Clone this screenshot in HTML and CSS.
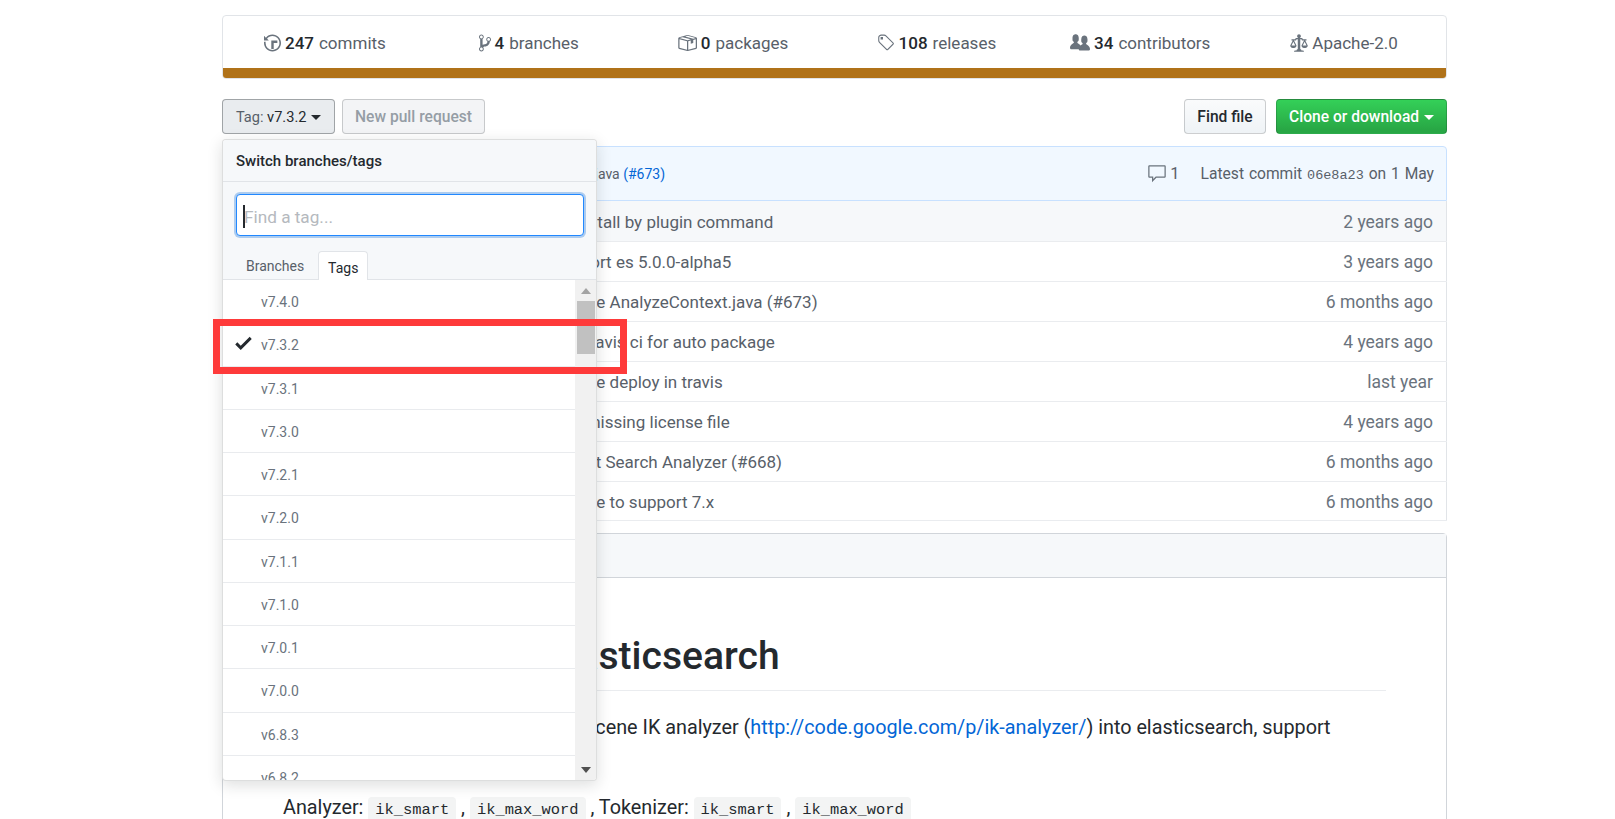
FILE: index.html
```html
<!DOCTYPE html>
<html>
<head>
<title>medcl/elasticsearch-analysis-ik</title>
<link rel="stylesheet" href="styles.css">
</head>
<body>

<div class="container">

  <div class="summary">
    <ul class="numbers">
      <li><svg class="icon" width="17" height="20" viewBox="0 0 14 16"><path d="M8 13H6V6h5v2H8v5zM7 1C4.81 1 2.87 2.02 1.59 3.59L0 2v4h4L2.5 4.5C3.55 3.17 5.17 2.3 7 2.3c3.14 0 5.7 2.56 5.7 5.7s-2.56 5.7-5.7 5.7A5.71 5.71 0 0 1 1.3 8c0-.34.03-.67.09-1H.08C.03 7.33 0 7.66 0 8c0 3.86 3.14 7 7 7s7-3.14 7-7-3.14-7-7-7z"/></svg><b>247</b> commits</li>
      <li><svg class="icon" width="12" height="20" viewBox="0 0 10 16"><path d="M10 5c0-1.11-.89-2-2-2a1.993 1.993 0 0 0-1 3.72v.3c-.02.52-.23.98-.63 1.38-.4.4-.86.61-1.38.63-.83.02-1.48.16-2 .45V4.72a1.993 1.993 0 0 0-1-3.72C.88 1 0 1.89 0 3a2 2 0 0 0 1 1.72v6.56c-.59.35-1 .99-1 1.72 0 1.11.89 2 2 2 1.11 0 2-.89 2-2 0-.53-.2-1-.53-1.36.09-.06.48-.41.59-.47.25-.11.56-.17.94-.17 1.05-.05 1.95-.45 2.75-1.25S8.95 7.77 9 6.73h-.02C9.59 6.37 10 5.73 10 5zM2 1.8c.66 0 1.2.55 1.2 1.2 0 .65-.55 1.2-1.2 1.2C1.35 4.2.8 3.65.8 3c0-.65.55-1.2 1.2-1.2zm0 12.41c-.66 0-1.2-.55-1.2-1.2 0-.65.55-1.2 1.2-1.2.65 0 1.2.55 1.2 1.2 0 .65-.55 1.2-1.2 1.2zm6-8c-.66 0-1.2-.55-1.2-1.2 0-.65.55-1.2 1.2-1.2.65 0 1.2.55 1.2 1.2 0 .65-.55 1.2-1.2 1.2z"/></svg><b>4</b> branches</li>
      <li><svg class="icon" width="20" height="20" viewBox="0 0 16 16"><path d="M1 4.27v7.47c0 .45.3.84.75.97l6.5 1.73c.16.05.34.05.5 0l6.5-1.73c.45-.13.75-.52.75-.97V4.27c0-.45-.3-.84-.75-.97l-6.5-1.74a1.4 1.4 0 0 0-.5 0L1.75 3.3c-.45.13-.75.52-.75.97zm7 9.09l-6-1.59V5l6 1.61v6.75zM2 4l2.5-.67L11 5.06l-2.5.67L2 4zm13 7.77l-6 1.59V6.61l2-.55V8.5l2-.53V5.53L15 5v6.77zm-2-7.24L6.5 2.8l2-.53L15 4l-2 .53z"/></svg><b>0</b> packages</li>
      <li><svg class="icon" width="18" height="20" viewBox="0 0 15 16"><path d="M7.73 1.73C7.26 1.26 6.62 1 5.96 1H3.5C2.13 1 1 2.13 1 3.5v2.47c0 .66.27 1.3.73 1.77l6.06 6.06c.39.39 1.02.39 1.41 0l4.59-4.59a.996.996 0 0 0 0-1.41L7.73 1.73zM2.38 7.09c-.31-.3-.47-.7-.47-1.13V3.5c0-.88.72-1.59 1.59-1.59h2.47c.42 0 .83.16 1.13.47l6.14 6.13-4.73 4.73-6.13-6.15zM3.01 3h2v2H3V3h.01z"/></svg><b>108</b> releases</li>
      <li><svg class="icon" width="20" height="20" viewBox="0 0 16 16"><path d="M16 12.999c0 .439-.45 1-1 1H7.995c-.539 0-.994-.447-.995-.999H1c-.54 0-1-.561-1-1 0-2.634 3-4 3-4s.229-.409 0-1c-.841-.621-1.058-.59-1-3 .058-2.419 1.367-3 2.5-3s2.442.58 2.5 3c.058 2.41-.159 2.379-1 3-.229.59 0 1 0 1s1.549.711 2.42 2.088C9.196 9.369 10 8.999 10 8.999s.229-.409 0-1c-.841-.62-1.058-.59-1-3 .058-2.419 1.367-3 2.5-3s2.437.581 2.495 3c.059 2.41-.158 2.38-1 3-.229.59 0 1 0 1s3.005 1.366 3.005 4z"/></svg><b>34</b> contributors</li>
      <li><svg class="icon" width="18" height="20" viewBox="0 0 14 16"><path d="M7 4c-.83 0-1.5-.67-1.5-1.5S6.17 1 7 1s1.5.67 1.5 1.5S7.83 4 7 4zm7 6c0 1.11-.89 2-2 2h-1c-1.11 0-2-.89-2-2l2-4h-1c-.55 0-1-.45-1-1H8v8c.42 0 1 .45 1 1h1c.42 0 1 .45 1 1H3c0-.55.58-1 1-1h1c0-.55.58-1 1-1h.03L6 5H5c0 .55-.45 1-1 1H3l2 4c0 1.11-.89 2-2 2H2c-1.11 0-2-.89-2-2l2-4H1V5h3c0-.55.45-1 1-1h4c.55 0 1 .45 1 1h3v1h-1l2 4zM2.5 7L1 10h3L2.5 7zM13 10l-1.5-3L10 10h3z"/></svg>Apache-2.0</li>
    </ul>
    <div class="lang-bar"></div>
  </div>

  <div class="toolbar">
    <div class="branch-select">
      <button class="btn btn-open"><span class="btn-label">Tag:</span> v7.3.2 <i class="caret"></i></button>

      <div class="menu">
        <div class="menu-header">Switch branches/tags</div>
        <div class="menu-filter">
          <input class="filter-input" type="text" placeholder="Find a tag...">
          <span class="input-caret"></span>
        </div>
        <div class="menu-tabs">
          <span class="tab">Branches</span>
          <span class="tab tab-active">Tags</span>
        </div>
        <div class="menu-body">
          <ul class="tag-list">
            <li>v7.4.0</li>
            <li class="selected"><svg class="check" width="17" height="22" viewBox="0 0 12 16"><path d="M12 5l-8 8-4-4 1.5-1.5L4 10l6.5-6.5L12 5z"/></svg>v7.3.2</li>
            <li>v7.3.1</li>
            <li>v7.3.0</li>
            <li>v7.2.1</li>
            <li>v7.2.0</li>
            <li>v7.1.1</li>
            <li>v7.1.0</li>
            <li>v7.0.1</li>
            <li>v7.0.0</li>
            <li>v6.8.3</li>
            <li>v6.8.2</li>
          </ul>
          <div class="scrollbar">
            <i class="arrow-up"></i>
            <div class="thumb"></div>
            <i class="arrow-down"></i>
          </div>
        </div>
      </div>
    </div>

    <button class="btn btn-disabled">New pull request</button>
    <button class="btn btn-find">Find file</button>
    <button class="btn btn-green">Clone or download <i class="caret"></i></button>
  </div>

  <div class="tease">
    <span class="tease-msg">medcl Update AnalyzeContext.java <a href="#">(#673)</a></span>
    <span class="tease-comments"><svg class="icon" width="20" height="20" viewBox="0 0 16 16"><path d="M14 1H2c-.55 0-1 .45-1 1v8c0 .55.45 1 1 1h2v3.5L7.5 11H14c.55 0 1-.45 1-1V2c0-.55-.45-1-1-1zm0 9H7l-2 2v-2H2V2h12v8z"/></svg>1</span>
    <span class="tease-latest">Latest commit <code>06e8a23</code> on 1 May</span>
  </div>

  <table class="files">
    <tr class="row-hover"><td class="msg">fix install by plugin command</td><td class="age">2 years ago</td></tr>
    <tr><td class="msg">support es 5.0.0-alpha5</td><td class="age">3 years ago</td></tr>
    <tr><td class="msg">update AnalyzeContext.java (#673)</td><td class="age">6 months ago</td></tr>
    <tr><td class="msg">use travis ci for auto package</td><td class="age">4 years ago</td></tr>
    <tr><td class="msg">update deploy in travis</td><td class="age">last year</td></tr>
    <tr><td class="msg">add missing license file</td><td class="age">4 years ago</td></tr>
    <tr><td class="msg">Revert Search Analyzer (#668)</td><td class="age">6 months ago</td></tr>
    <tr><td class="msg">update to support 7.x</td><td class="age">6 months ago</td></tr>
  </table>

  <div class="readme">
    <div class="readme-head"></div>
    <div class="readme-body">
      <h1>IK Analysis for Elasticsearch</h1>
      <p>The IK Analysis plugin integrates Lucene IK analyzer (<a href="#">http://code.google.com/p/ik-analyzer/</a>) into elasticsearch, support customized dictionary.</p>
      <p>Analyzer: <code>ik_smart</code> , <code>ik_max_word</code> , Tokenizer: <code>ik_smart</code> , <code>ik_max_word</code></p>
    </div>
  </div>
</div>

<div class="highlight"></div>

</body>
</html>
```

FILE: styles.css
```css
html {
  overflow: hidden;
}
body {
  margin: 0;
  font-family: Roboto, "Liberation Sans", sans-serif;
  font-size: 17px;
  color: #24292e;
  background: #fff;
}
a {
  color: #0366d6;
  text-decoration: none;
}
ul {
  list-style: none;
  margin: 0;
  padding: 0;
}
code {
  font-family: "Liberation Mono", monospace;
}
.icon {
  fill: #6a737d;
  flex: none;
}

.container {
  width: 1225px;
  margin-left: 222px;
  padding-top: 15px;
}

/* numbers bar */
.summary {
  border: 1px solid #e1e4e8;
  border-radius: 4px;
  overflow: hidden;
}
.numbers {
  display: flex;
  height: 52px;
}
.numbers li {
  flex: 1;
  display: flex;
  align-items: center;
  justify-content: center;
  gap: 4px;
  padding-top: 2px;
  box-sizing: border-box;
  color: #586069;
}
.numbers b {
  color: #24292e;
  font-weight: 500;
  margin-right: 1px;
}
.lang-bar {
  height: 10px;
  background: #b07219;
}

/* buttons */
.toolbar {
  display: flex;
  align-items: flex-start;
  margin-top: 20px;
}
.btn {
  height: 35px;
  padding: 0;
  font-family: inherit;
  font-size: 15.6px;
  font-weight: 500;
  color: #24292e;
  border: 1px solid rgba(27,31,35,.2);
  border-radius: 4px;
  background: linear-gradient(#fafbfc, #eff3f6);
}
.btn-open {
  width: 113px;
  font-size: 14.6px;
  font-weight: 400;
  background: #e9ecef;
  border-color: rgba(27,31,35,.35);
}
.btn-label {
  color: #586069;
}
.btn-disabled {
  width: 143px;
  margin-left: 7px;
  color: #959da5;
  background: #f3f4f6;
}
.btn-find {
  width: 82px;
  margin-left: auto;
}
.btn-green {
  width: 171px;
  margin-left: 10px;
  color: #fff;
  background: linear-gradient(#34d058, #28a745 90%);
}
.caret {
  display: inline-block;
  width: 0;
  height: 0;
  margin-left: 1px;
  vertical-align: 2px;
  border-top: 5px solid currentColor;
  border-left: 5px solid transparent;
  border-right: 5px solid transparent;
}

/* branch dropdown */
.branch-select {
  position: relative;
}
.menu {
  position: absolute;
  z-index: 10;
  top: 40px;
  left: 0;
  width: 375px;
  height: 642px;
  box-sizing: border-box;
  display: flex;
  flex-direction: column;
  background: #fff;
  border: 1px solid rgba(27,31,35,.15);
  border-radius: 4px;
  box-shadow: 0 4px 15px rgba(27,31,35,.15);
  overflow: hidden;
}
.menu-header {
  height: 41px;
  line-height: 43px;
  padding-left: 13px;
  font-size: 15px;
  font-weight: 500;
  background: #f6f8fa;
  border-bottom: 1px solid #e1e4e8;
}
.menu-filter {
  position: relative;
  padding: 12px 12px 0 13px;
  background: #f6f8fa;
}
.filter-input {
  display: block;
  width: 100%;
  height: 42px;
  box-sizing: border-box;
  padding: 3px 7px 0;
  font-family: inherit;
  font-size: 17.2px;
  border: 1px solid #2188ff;
  border-radius: 4px;
  outline: none;
  box-shadow: 0 0 0 2px rgba(3,102,214,.3);
}
.filter-input::placeholder {
  color: #b5b9be;
}
.input-caret {
  position: absolute;
  left: 20px;
  top: 23px;
  width: 1.5px;
  height: 23px;
  background: #24292e;
}
.menu-tabs {
  display: flex;
  align-items: flex-end;
  height: 43px;
  padding-left: 10px;
  background: #f6f8fa;
  border-bottom: 1px solid #e1e4e8;
  font-size: 14px;
}
.tab {
  height: 29px;
  line-height: 32px;
  padding: 0 14px 0 13px;
  color: #586069;
}
.tab-active {
  width: 50px;
  box-sizing: border-box;
  margin-bottom: -1px;
  padding: 0;
  text-align: center;
  color: #24292e;
  background: #fff;
  border: 1px solid #e1e4e8;
  border-bottom: 0;
  border-radius: 4px 4px 0 0;
}
.menu-body {
  flex: 1;
  min-height: 0;
  display: flex;
}
.tag-list {
  flex: 1;
  overflow: hidden;
}
.tag-list li {
  position: relative;
  height: 43.25px;
  line-height: 44px;
  box-sizing: border-box;
  padding-left: 38px;
  font-size: 14px;
  color: #6a737d;
  border-bottom: 1px solid #e9ebee;
}
.check {
  position: absolute;
  left: 12px;
  top: 9px;
  fill: #24292e;
}
.scrollbar {
  position: relative;
  flex: none;
  width: 21px;
  background: #f1f1f1;
}
.thumb {
  position: absolute;
  left: 2px;
  right: 1px;
  top: 21px;
  height: 53px;
  background: #c1c1c1;
}
.arrow-up,
.arrow-down {
  position: absolute;
  left: 6px;
  width: 0;
  height: 0;
  border-left: 5px solid transparent;
  border-right: 5px solid transparent;
}
.arrow-up {
  top: 8px;
  border-bottom: 6px solid #a3a3a3;
}
.arrow-down {
  bottom: 7px;
  border-top: 6px solid #505050;
}

/* last commit */
.tease {
  display: flex;
  align-items: center;
  height: 55px;
  box-sizing: border-box;
  margin-top: 12px;
  padding: 0 12px 0 15px;
  font-size: 15.6px;
  color: #586069;
  background: #f1f8ff;
  border: 1px solid #c8e1ff;
  border-radius: 4px 4px 0 0;
}
.tease-msg {
  margin-left: 166px;
  margin-right: auto;
  font-size: 14px;
}
.tease-comments {
  display: flex;
  align-items: center;
  gap: 3px;
  margin-right: 21px;
  font-size: 16.5px;
}
.tease-latest {
  word-spacing: 1px;
}
.tease-latest code {
  font-size: 13.5px;
  word-spacing: 0;
}

/* file list */
.files {
  width: 100%;
  border-collapse: collapse;
  border: 1px solid #e1e4e8;
  border-top: 0;
}
.files td {
  height: 40px;
  padding: 2px 13px 0 0;
  box-sizing: border-box;
  border-bottom: 1px solid #eaecef;
}
.files tr:last-child td {
  height: 39px;
}
.files .msg {
  padding-left: 330px;
  color: #586069;
}
.files .age {
  text-align: right;
  font-size: 17.5px;
  color: #6a737d;
  white-space: nowrap;
}
.row-hover {
  background: #f6f8fa;
}

/* readme */
.readme {
  margin-top: 12px;
  border: 1px solid #d1d5da;
  border-radius: 4px 4px 0 0;
}
.readme-head {
  height: 43px;
  background: #f6f8fa;
  border-bottom: 1px solid #d1d5da;
}
.readme-body {
  padding: 53px 60px 0;
  font-size: 19.8px;
  line-height: 30px;
}
.readme-body h1 {
  margin: 0 0 22px;
  padding-bottom: 9px;
  font-size: 39.1px;
  line-height: 50px;
  font-weight: 500;
  border-bottom: 1px solid #eaecef;
}
.readme-body p {
  margin: 0 0 20px;
  color: #24292e;
}
.readme-body code {
  padding: 4px 7px;
  font-size: 15.4px;
  background: #f3f4f4;
  border-radius: 4px;
}

/* red annotation box drawn over the screenshot */
.highlight {
  position: absolute;
  z-index: 20;
  left: 213px;
  top: 319px;
  width: 414px;
  height: 55px;
  box-sizing: border-box;
  border: 7px solid #fe3a3a;
}
```
